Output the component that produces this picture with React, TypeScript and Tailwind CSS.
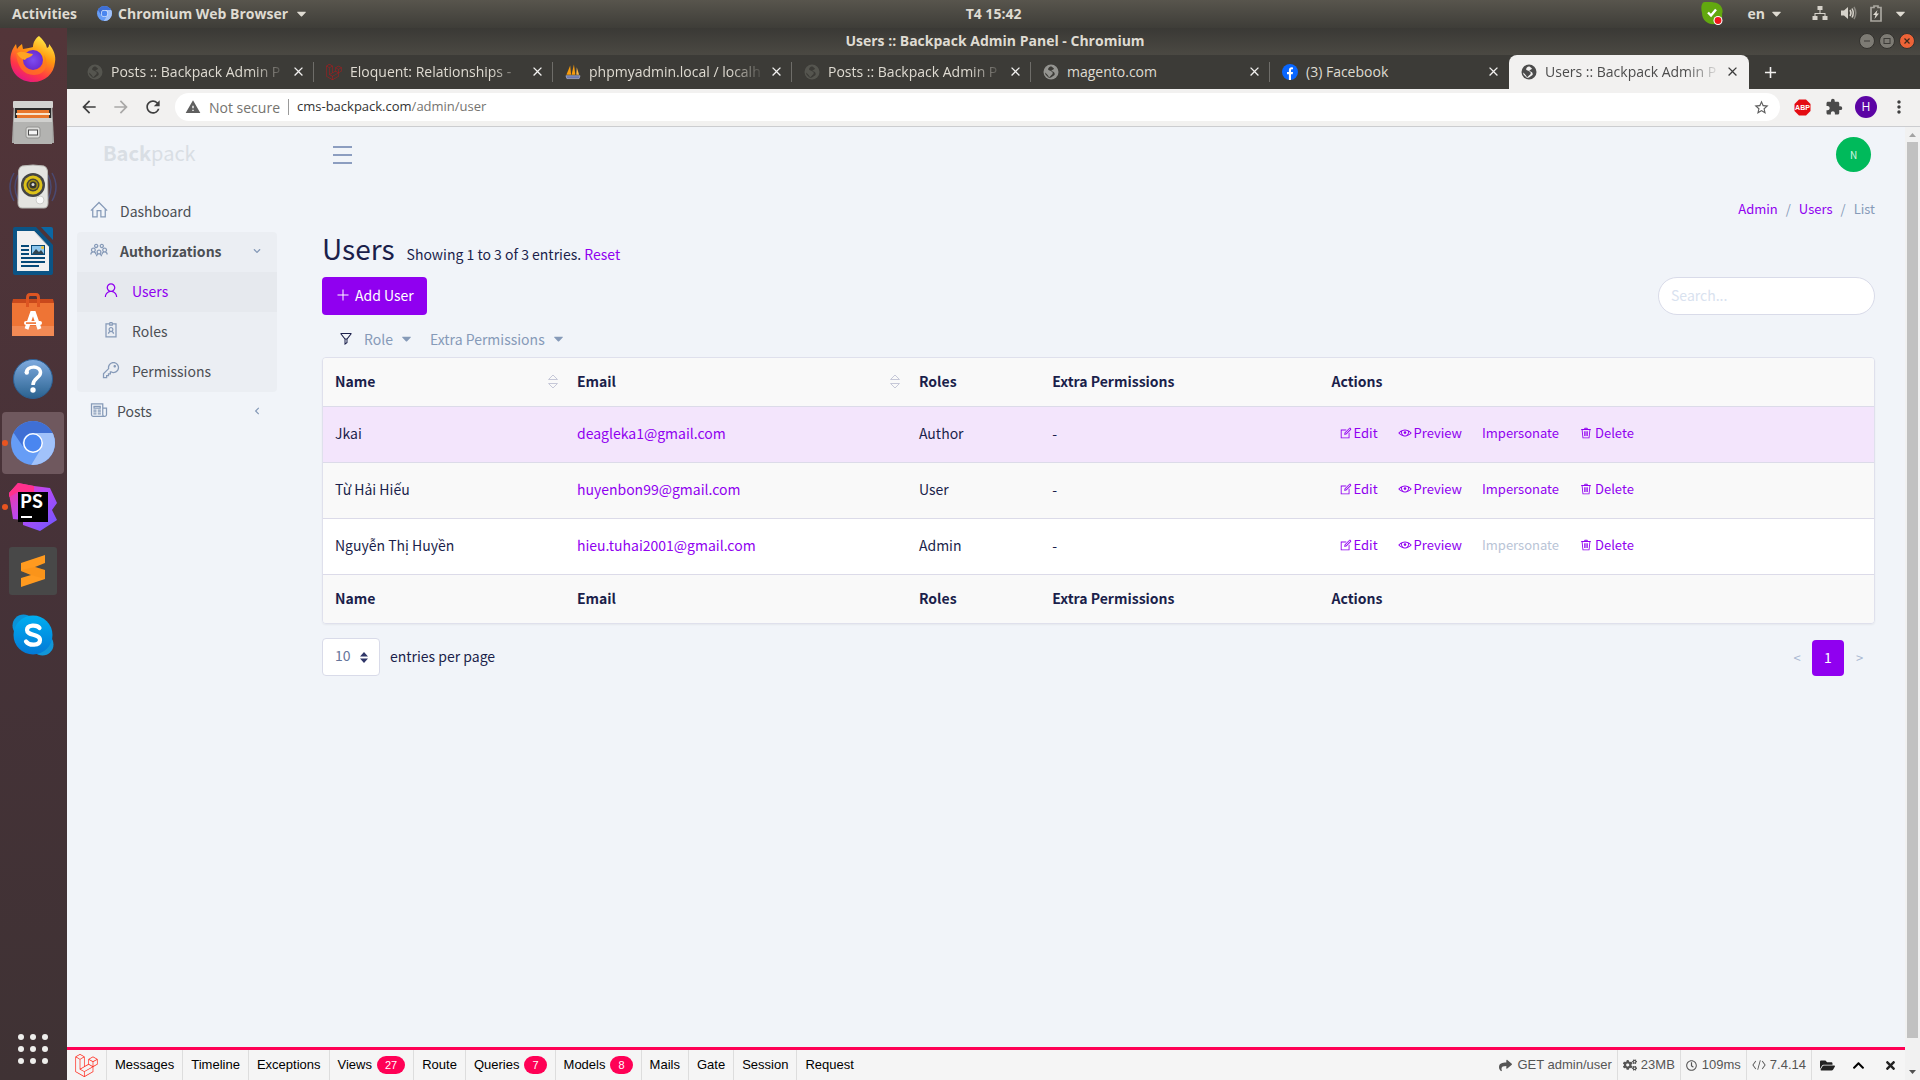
import React from "react";
import {
  LiaHomeSolid, LiaUsersSolid, LiaUserSolid, LiaIdBadge, LiaKeySolid, LiaNewspaper,
  LiaEdit, LiaEye, LiaTrashSolid, LiaPlusSolid, LiaFilterSolid, LiaCodeSolid,
} from "react-icons/lia";
import { FaLaravel, FaShare, FaCogs, FaRegClock, FaFolderOpen, FaChevronUp, FaTimes, FaChevronDown, FaChevronLeft, FaCaretDown } from "react-icons/fa";
import { MdArrowBack, MdArrowForward, MdRefresh, MdWarning, MdStarBorder, MdExtension, MdMoreVert, MdAdd, MdClose } from "react-icons/md";

function ChromiumIcon({ size, id }: { size: number; id: string }) {
  return (
    <svg width={size} height={size} viewBox="0 0 44 44" aria-hidden="true">
      <defs>
        <clipPath id={id}><circle cx="22" cy="22" r="22" /></clipPath>
      </defs>
      <g clipPath={`url(#${id})`}>
        <rect width="44" height="44" fill="#669df6" />
        <path d="M22 12 H44 V0 H0 V8 L13 27 A10 10 0 0 1 22 12Z" fill="#3f6fd4" />
        <path d="M22 12 H46 V46 H19 L30.500 27 A10 10 0 0 0 22 12Z" fill="#a1c2fa" />
      </g>
      <circle cx="22" cy="22" r="10" fill="#fff" />
      <circle cx="22" cy="22" r="8.500" fill="#4a86f0" />
    </svg>
  );
}

function GlobeIcon({ color, hole }: { color: string; hole: string }) {
  return (
    <svg width="16" height="16" viewBox="0 0 16 16" className="shrink-0" aria-hidden="true">
      <circle cx="8" cy="8" r="7.500" fill={color} />
      <path d="M8.500 2.500 C6 2 4.500 5 5.500 6 C7 6.500 8 7 9 8 C10.500 8.500 9.500 10.500 8.500 11 L6 13.500 C5.500 11 3.500 10 2 8.500 L2.500 10.500 L6 14 L8 13.500 L11.500 11 C12.500 8.500 10 7.500 8.500 7 C8 6 10.500 6 11 4.500Z" fill={hole} />
    </svg>
  );
}

function SailIcon() {
  return (
    <svg width="16" height="16" viewBox="0 0 17 16" className="shrink-0" aria-hidden="true">
      <path d="M5.500 1 L6.500 11 H1.500Z" fill="#f89c0e" />
      <path d="M9.500 0 L11 11 H7Z" fill="#f89c0e" />
      <path d="M12.500 3 L15 11 H12Z" fill="#f8b54a" />
      <path d="M1 12 H16 L15 15 H2Z" fill="#6c78af" stroke="#c4c8e0" strokeWidth=".6" />
    </svg>
  );
}

function FacebookIcon() {
  return (
    <svg width="16" height="16" viewBox="0 0 16 16" className="shrink-0" aria-hidden="true">
      <circle cx="8" cy="8" r="8" fill="#0866ff" />
      <path d="M6.900 16 V10.300 H5 V8 H6.900 V6.300 C6.900 4.300 8 3.300 9.700 3.300 L11 3.400 V5.300 H10 C9.200 5.300 9 5.800 9 6.400 V8 H11 L10.700 10.300 H9 V16Z" fill="#fff" />
    </svg>
  );
}

type Tab = { title: string; icon: React.ReactNode };
const tabs: Tab[] = [
  { title: "Posts :: Backpack Admin P", icon: <GlobeIcon color="#55554f" hole="#3c3b37" /> },
  { title: "Eloquent: Relationships -", icon: <FaLaravel size={16} color="#b3191c" className="shrink-0" /> },
  { title: "phpmyadmin.local / localh", icon: <SailIcon /> },
  { title: "Posts :: Backpack Admin P", icon: <GlobeIcon color="#55554f" hole="#3c3b37" /> },
  { title: "magento.com", icon: <GlobeIcon color="#949490" hole="#3c3b37" /> },
  { title: "(3) Facebook", icon: <FacebookIcon /> },
];

function TopPanel() {
  return (
    <header className="flex h-7 shrink-0 items-center bg-linear-to-b from-[#58554d] to-[#3e3d38] px-3 pb-0.5 text-[14px] font-bold text-[#dfdbd2]">
      <div className="flex grow basis-[67px] items-center">
        <button className="mr-5">Activities</button>
        <button className="flex items-center gap-1.5">
          <ChromiumIcon size={15} id="chromium-panel" />
          Chromium Web Browser
          <FaCaretDown size={15} />
        </button>
      </div>
      <time>T4 15:42</time>
      <div className="flex grow basis-0 items-center justify-end">
        <svg width="23" height="23" viewBox="0 0 23 23" aria-label="Skype status" className="mr-6">
          <path d="M2 0.500 C6 -1 11 0 13 0.500 C20 1 23 8 21 12 C22 18 18 22 14 22 C8 23 1 19 1 11 C0 7 0 3 2 0.500Z" fill="#62a80f" />
          <path d="M7 10.500 L10 13.500 L15 7.500" fill="none" stroke="#fff" strokeWidth="2.400" />
          <circle cx="17" cy="18.500" r="4.500" fill="#fff" />
          <circle cx="17" cy="18.500" r="3.400" fill="#f0181c" />
        </svg>
        <button className="mr-7 flex items-center gap-1">en <FaCaretDown size={15} /></button>
        <svg width="16" height="16" viewBox="0 0 16 16" fill="#d6d2ca" aria-label="Network" className="mr-3">
          <path d="M5.500 1 h5 v4 h-2 v3 h5 v3 h2 v4 h-5 v-4 h2 v-2 H3.500 v2 h2 v4 h-5 v-4 h2 v-3 h5 V5 h-2Z" />
        </svg>
        <svg width="17" height="16" viewBox="0 0 17 16" aria-label="Volume" className="mr-3">
          <path d="M1 5.500 h3 L8 2 v12 L4 10.500 H1Z" fill="#d6d2ca" />
          <path d="M10 5 Q12 8 10 11 M12 3.500 Q14.500 8 12 12.500" fill="none" stroke="#d6d2ca" strokeWidth="1.500" />
          <path d="M14 2 Q17.500 8 14 14" fill="none" stroke="#8a8780" strokeWidth="1.500" />
        </svg>
        <svg width="14" height="17" viewBox="0 0 14 17" aria-label="Battery" className="mr-2.5">
          <path d="M5 2.500 V1 h4 v1.500 h3 V16 H2 V2.500Z" fill="none" stroke="#a9a69f" strokeWidth="1.700" />
          <path d="M8.500 5 L4 10 h2.500 L5.500 14 L10 8.500 H7.500Z" fill="#dfdbd2" />
        </svg>
        <FaCaretDown size={15} />
      </div>
    </header>
  );
}

function TitleBar() {
  return (
    <div className="flex h-[27px] shrink-0 items-center bg-linear-to-b from-[#3a3935] to-[#4b4943] pr-[5px] pb-0.5">
      <span className="w-16" />
      <h1 className="flex-1 text-center text-[14px] font-bold text-[#dfdbd2]">Users :: Backpack Admin Panel - Chromium</h1>
      <div className="flex gap-1">
        <button aria-label="Minimize" className="h-4 w-4 rounded-full border border-[#33322e] bg-[#7d7b74]">
          <svg viewBox="0 0 14 14" stroke="#3c3b37"><path d="M4 7 h6" /></svg>
        </button>
        <button aria-label="Maximize" className="h-4 w-4 rounded-full border border-[#33322e] bg-[#7d7b74]">
          <svg viewBox="0 0 14 14" stroke="#3c3b37" fill="none"><rect x="4" y="4.500" width="6" height="5" /></svg>
        </button>
        <button aria-label="Close window" className="h-4 w-4 rounded-full border border-[#33322e] bg-[#ee6337]">
          <svg viewBox="0 0 14 14" stroke="#3c2a1c" strokeWidth="1.200"><path d="M4.500 4.500 l5 5 M9.500 4.500 l-5 5" /></svg>
        </button>
      </div>
    </div>
  );
}

function TabStrip() {
  return (
    <div className="flex h-[34px] shrink-0 bg-[#3c3b37] pl-2 text-[14px]">
      {tabs.map((t, i) => (
        <div key={i} className="flex w-[239px] items-center pb-px pl-3">
          {t.icon}
          <span className={i < 4 ? "ml-2 w-[176px] whitespace-nowrap mask-r-from-80% text-[#dfdbd2]" : "ml-2 w-[176px] whitespace-nowrap text-[#dfdbd2]"}>{t.title}</span>
          <button aria-label="Close tab" className="ml-1 text-[#f2f1f0]"><MdClose size={15} /></button>
          <span className={i === 5 ? "hidden" : "ml-auto h-5 w-px bg-[#6e6d69]"} />
        </div>
      ))}
      <div className="flex w-[240px] items-center rounded-t-lg bg-[#f2f1f0] pb-px pl-3">
        <GlobeIcon color="#4c4c4c" hole="#f2f1f0" />
        <span className="ml-2 w-[176px] whitespace-nowrap mask-r-from-80% text-[#4c4c4c]">Users :: Backpack Admin P</span>
        <button aria-label="Close tab" className="ml-1 text-[#3c3c3c]"><MdClose size={15} /></button>
      </div>
      <button aria-label="New tab" className="ml-3 text-[#f2f1f0]"><MdAdd size={19} /></button>
    </div>
  );
}

function Toolbar() {
  return (
    <div className="flex h-[38px] shrink-0 items-center border-b border-[#cccdd0] bg-[#f2f1f0] px-3 pb-px">
      <div className="flex gap-3 text-[#3f3f3f]">
        <button aria-label="Back"><MdArrowBack size={20} /></button>
        <button aria-label="Forward" className="text-[#a9a8a7]"><MdArrowForward size={20} /></button>
        <button aria-label="Reload"><MdRefresh size={20} /></button>
      </div>
      <div className="ml-3 flex h-7 flex-1 items-center rounded-full bg-white px-2.5 text-[13px] text-[#75736f]">
        <MdWarning size={16} color="#5f5f5f" />
        <span className="ml-2 text-[14px]">Not secure</span>
        <span className="mx-2 h-4 w-px bg-[#9a9a9a]" />
        <span className="flex-1"><span className="text-[#333]">cms-backpack.com</span>/admin/user</span>
        <button aria-label="Bookmark"><MdStarBorder size={17} color="#5f5f5f" /></button>
      </div>
      <button aria-label="Adblock Plus" className="ml-3.5">
        <svg width="17" height="17" viewBox="0 0 17 17">
          <path d="M5 0.500 h7 l4.500 4.500 v7 l-4.500 4.500 h-7 L0.500 12 V5Z" fill="#e40c12" />
          <text x="8.500" y="11" textAnchor="middle" fontSize="7" fontWeight="700" fill="#fff" fontFamily="Liberation Sans">ABP</text>
        </svg>
      </button>
      <button aria-label="Extensions" className="ml-3.5"><MdExtension size={18} color="#4a4a4a" /></button>
      <button className="ml-3 h-[22px] w-[22px] rounded-full bg-[#5c04a4] text-[12px] text-white">H</button>
      <button aria-label="Menu" className="ml-3 -mr-px"><MdMoreVert size={20} color="#3f3f3f" /></button>
    </div>
  );
}

function FirefoxIcon() {
  return (
    <svg width="48" height="48" viewBox="0 0 48 48" aria-hidden="true">
      <defs>
        <linearGradient id="ff-a" x1="0.800" y1="0" x2="0.300" y2="1">
          <stop offset="0" stopColor="#fff44f" /><stop offset=".4" stopColor="#ff980e" /><stop offset=".75" stopColor="#ff3647" /><stop offset="1" stopColor="#e31587" />
        </linearGradient>
        <radialGradient id="ff-b"><stop offset="0" stopColor="#7d4df0" /><stop offset="1" stopColor="#6a2bd0" /></radialGradient>
      </defs>
      <path d="M30 1 C34 5 37 8 38 13 C40 12 40 11 40 9 C45 15 47 21 46 27 C45 39 36 47 24 47 C11 47 2 38 1.500 26 C1 20 3 14 7 9 L8 14 C10 11 12 10 13 9 L14 14 C18 13 22 13 24 12 C24 7 27 3 30 1Z" fill="url(#ff-a)" />
      <path d="M7 18 C12 15 17 18 24 19 C22 23 17 22 16 25 C15 30 20 34 26 34 C34 34 37 27 35 20 C41 29 36 40 25 40 C14 40 8 31 7 18Z" fill="#ff7a1c" opacity=".7" />
      <circle cx="24" cy="25" r="10" fill="url(#ff-b)" />
      <path d="M8 18 C13 15 17 18 24 19 C22 23 18 22 16 25 C12 24 9 21 8 18Z" fill="#ffa321" />
    </svg>
  );
}

function FilesIcon() {
  return (
    <svg width="44" height="48" viewBox="0 0 44 48" aria-hidden="true">
      <path d="M3 2 H41 L43 42 V44 H1 V42Z" fill="#a9a9a7" /><rect x="2" y="2" width="40" height="7" rx="1" fill="#d2d2d0" />
      <rect x="4" y="9" width="36" height="12" fill="#2b2b2b" />
      <path d="M6 11 H38 V19 H6Z" fill="#e8762c" /><path d="M5 14 H39 V16 H5Z" fill="#f7e3cb" />
      <path d="M3 19 H41 V45 H3Z" fill="#b3b3b1" /><path d="M3 19 H41 V23 H3Z" fill="#d0d0ce" />
      <rect x="15" y="28" width="14" height="11" rx="2" fill="#dcdcda" stroke="#929290" />
      <rect x="17.500" y="31" width="9" height="5" fill="#f5f5f5" stroke="#4c4c4c" />
    </svg>
  );
}

function SpeakerIcon() {
  return (
    <svg width="48" height="48" viewBox="0 0 48 48" aria-hidden="true">
      <path d="M5 10 Q-3 24 5 38 M9 12 Q3 24 9 36 M43 10 Q51 24 43 38 M39 12 Q45 24 39 36" stroke="#4a4a72" strokeWidth="1.500" fill="none" />
      <path d="M13 3 Q24 1 35 3 Q38 4 38.500 8 L39 40 Q39 45 35 45 H13 Q9 45 9 40 L9.500 8 Q10 4 13 3Z" fill="#e4e4e1" stroke="#b6b6b2" />
      <circle cx="24" cy="22" r="12" fill="#454545" /><circle cx="24" cy="22" r="9.500" fill="#ddc219" />
      <circle cx="24" cy="22" r="6.500" fill="#4a4636" /><circle cx="24" cy="22" r="5" fill="#a48f0e" />
      <circle cx="24" cy="22" r="3.500" fill="#35352f" /><circle cx="24" cy="21.500" r="1.500" fill="#ddd" />
      <circle cx="31" cy="37" r="4" fill="#fafafa" stroke="#cdcdca" />
    </svg>
  );
}

function WriterIcon() {
  return (
    <svg width="40" height="48" viewBox="0 0 40 48" aria-hidden="true">
      <path d="M2 0 H23 L40 18 V46 Q40 48 38 48 H2 Q0 48 0 46 V2 Q0 0 2 0Z" fill="#0b5485" />
      <path d="M28 0 H38 Q40 0 40 2 V13Z" fill="#0b67a3" />
      <path d="M4 4 H21 L36 20 V44 H4Z" fill="#f1f1f1" /><path d="M21 4 L36 20" stroke="#c4c4c4" />
      <path d="M8 19 h8 M8 23 h8 M8 27 h8 M8 31 h24 M8 35 h24 M8 39 h18" stroke="#064a78" strokeWidth="2" />
      <rect x="18.500" y="18.500" width="13" height="9" fill="#8cc6ec" stroke="#064a78" />
      <path d="M19 27 L23 22 L26 25 L28 23 L31 27Z" fill="#2f4450" /><circle cx="29.500" cy="20.500" r="1.500" fill="#f3c22c" />
    </svg>
  );
}

function SoftwareIcon() {
  return (
    <svg width="42" height="44" viewBox="0 0 42 44" aria-hidden="true">
      <path d="M1 6 H41 L42 10 H0Z" fill="#c9491c" />
      <path d="M0 10 H42 V43 H0Z" fill="#ee7435" /><path d="M0 33 H42 V43 H0Z" fill="#f28a55" />
      <path d="M15.500 14 V5 Q15.500 1.500 18 1.500 H24 Q26.500 1.500 26.500 5 V14" fill="none" stroke="#dd5522" strokeWidth="3" />
      <path d="M14.500 36 L20 20 H22 L27.500 36" fill="none" stroke="#fff" strokeWidth="4" />
      <rect x="12" y="28" width="18" height="4" rx="2" fill="#fff" /><rect x="14" y="29.300" width="10" height="1.600" fill="#ee7435" />
    </svg>
  );
}

function HelpIcon() {
  return (
    <svg width="42" height="42" viewBox="0 0 42 42" aria-hidden="true">
      <defs><linearGradient id="help" x2="0" y2="1"><stop stopColor="#7fabe0" /><stop offset="1" stopColor="#2a628f" /></linearGradient></defs>
      <circle cx="21" cy="21" r="19.500" fill="url(#help)" stroke="#2c5f93" />
      <path d="M14.500 15 C14 7.500 28.500 7 28.500 14.500 C28.500 20 21 20 21 27" fill="none" stroke="#fff" strokeWidth="3.500" />
      <circle cx="14.800" cy="14.500" r="2.200" fill="#fff" /><circle cx="21" cy="32" r="2.700" fill="#fff" />
    </svg>
  );
}

function PhpStormIcon() {
  return (
    <svg width="48" height="48" viewBox="0 0 48 48" aria-hidden="true">
      <defs><linearGradient id="ps" x2="1" y2="1"><stop stopColor="#ff318c" /><stop offset=".45" stopColor="#b74af7" /><stop offset="1" stopColor="#6b57ff" /></linearGradient></defs>
      <path d="M9 0 L25 3 L41 5 L48 20 L43 27 L48 37 L31 48 L14 42 V37 L4 36 L0 10Z" fill="url(#ps)" />
      <path d="M9 0 L25 3 V9 H9 L0 14 V10Z" fill="#ff318c" />
      <rect x="9" y="9" width="30" height="30" fill="#000" />
      <text x="11" y="25" fontSize="18" fontWeight="700" fill="#fff" fontFamily="Noto Sans CJK SC">PS</text>
      <rect x="12" y="33" width="11" height="2" fill="#fff" />
    </svg>
  );
}

function SublimeIcon() {
  return (
    <svg width="48" height="48" viewBox="0 0 48 48" aria-hidden="true">
      <rect width="48" height="48" rx="3" fill="#484848" />
      <path d="M12 16 L36 8 V16 L26 20 L36 23 V32 L12 40 V31 L22 28 L12 24Z" fill="#ff9a1f" />
      <path d="M26 20 L36 23 V32 L22 28 L12 24 V23Z" fill="#f08a10" opacity=".35" />
    </svg>
  );
}

function SkypeIcon() {
  return (
    <svg width="42" height="42" viewBox="0 0 42 42" aria-hidden="true">
      <defs><linearGradient id="sk" x2="0" y2="1"><stop stopColor="#00aef0" /><stop offset="1" stopColor="#0379d6" /></linearGradient></defs>
      <circle cx="11.500" cy="11.500" r="11" fill="#0a93d8" /><circle cx="30.500" cy="30.500" r="11" fill="#1196d8" />
      <circle cx="21" cy="21" r="19.500" fill="url(#sk)" />
      <path d="M27.500 14 C25 10.500 15 10.500 15 16 C15 22 28 19.500 28 26 C28 32 17 32 14 27.500" fill="none" stroke="#fff" strokeWidth="4.200" strokeLinecap="round" />
    </svg>
  );
}

const dock = [
  { name: "Firefox", icon: <FirefoxIcon /> },
  { name: "Files", icon: <FilesIcon /> },
  { name: "Rhythmbox", icon: <SpeakerIcon /> },
  { name: "Writer", icon: <WriterIcon /> },
  { name: "Software", icon: <SoftwareIcon /> },
  { name: "Help", icon: <HelpIcon /> },
  { name: "Chromium", icon: <ChromiumIcon size={44} id="chromium-dock" />, running: true, active: true },
  { name: "PhpStorm", icon: <PhpStormIcon />, running: true },
  { name: "Sublime Text", icon: <SublimeIcon /> },
  { name: "Skype", icon: <SkypeIcon /> },
];

function Dock() {
  return (
    <nav aria-label="Dock" className="flex w-[67px] shrink-0 flex-col bg-linear-to-b from-[#533539] via-[#463238] to-[#3f3234] pr-[3px] pb-1 pl-0.5">
      {dock.map((d) => (
        <button
          key={d.name}
          aria-label={d.name}
          className={
            d.active
              ? "relative mb-0.5 flex h-[62px] items-center justify-center rounded bg-[#6f585e]"
              : "relative mb-0.5 flex h-[62px] items-center justify-center"
          }
        >
          {d.icon}
          {d.running && <span className="absolute top-7 left-0 h-1.5 w-1.5 rounded-full bg-[#e95420]" />}
        </button>
      ))}
      <button aria-label="Show Applications" className="mx-auto mt-auto mb-3 grid grid-cols-3 gap-1.5">
        {Array.from({ length: 9 }, (_, i) => <span key={i} className="h-1.5 w-1.5 rounded-full bg-[#eeeeec]" />)}
      </button>
    </nav>
  );
}

function Sidebar() {
  return (
    <aside className="w-[210px] shrink-0 pl-2.5">
      <a href="#" className="ml-[26px] flex h-[54px] items-center pb-0.5 text-[20px] text-[#d9dee4]"><b>Back</b>pack</a>
      <nav aria-label="Main" className="mt-[11px] text-[14px] text-[#4b4f54]">
        <a href="#" className="flex h-10 items-center pb-0.5 pl-3"><LiaHomeSolid size={20} color="#869ab8" className="mr-[11px] mb-0.5" />Dashboard</a>
        <div className="rounded bg-[#ebeef3]">
          <a href="#" className="flex h-10 items-center pr-4 pb-0.5 pl-3 font-bold">
            <LiaUsersSolid size={20} color="#869ab8" className="mr-[11px] mb-0.5" />Authorizations
            <FaChevronDown size={8} color="#869ab8" className="ml-auto" />
          </a>
          <a href="#" className="flex h-10 items-center bg-[#e6e9ee] pb-0.5 pl-6 text-[#9000f0]"><LiaUserSolid size={20} className="mr-[11px] mb-0.5" />Users</a>
          <a href="#" className="flex h-10 items-center pb-0.5 pl-6"><LiaIdBadge size={20} color="#869ab8" className="mr-[11px] mb-0.5" />Roles</a>
          <a href="#" className="flex h-10 items-center pb-0.5 pl-6"><LiaKeySolid size={20} color="#869ab8" className="mr-[11px] mb-0.5" />Permissions</a>
        </div>
        <a href="#" className="flex h-10 items-center pr-4 pb-0.5 pl-3">
          <LiaNewspaper size={20} color="#869ab8" className="mr-2 mb-0.5" />Posts
          <FaChevronLeft size={8} color="#869ab8" className="ml-auto" />
        </a>
      </nav>
    </aside>
  );
}

function SortIcon() {
  return (
    <svg width="12" height="15" viewBox="0 0 12 15" fill="none" stroke="#c6c8d8" aria-hidden="true">
      <path d="M1.500 5.500 L6 1 L10.500 5.500Z M1.500 9.500 H10.500 L6 14Z" />
    </svg>
  );
}

const rows = [
  { name: "Jkai", email: "deagleka1@gmail.com", role: "Author", bg: "bg-[#f3e5fc]" },
  { name: "Từ Hải Hiếu", email: "huyenbon99@gmail.com", role: "User", bg: "bg-[#f9f9f9]" },
  { name: "Nguyễn Thị Huyền", email: "hieu.tuhai2001@gmail.com", role: "Admin", bg: "bg-white", self: true },
];
const columns = ["Name", "Email", "Roles", "Extra Permissions", "Actions"];

function UsersTable() {
  return (
    <div className="mt-1 overflow-hidden rounded border border-[#dfe0ec] shadow-xs">
      <table className="w-full table-fixed text-left">
        <colgroup>
          <col className="w-[15.6%]" />
          <col className="w-[22.05%]" />
          <col className="w-[8.6%]" />
          <col className="w-[18%]" />
          <col />
        </colgroup>
        <thead className="bg-[#f9f9f9]">
          <tr>
            {columns.map((c, i) => (
              <th key={c} scope="col" className="h-12 pr-1.5 pb-0.5 pl-3 font-bold">
                <div className="flex items-center justify-between">{c}{i < 2 && <button aria-label={"Sort by " + c} className="mt-0.5"><SortIcon /></button>}</div>
              </th>
            ))}
          </tr>
        </thead>
        <tbody>
          {rows.map((r) => (
            <tr key={r.email} className={r.bg}>
              <td className="h-14 border-t border-[#dcdbe9] px-3 pb-0.5">{r.name}</td>
              <td className="border-t border-[#dcdbe9] px-3 pb-0.5"><a href="#" className="text-[#9000f0]">{r.email}</a></td>
              <td className="border-t border-[#dcdbe9] px-3 pb-0.5">{r.role}</td>
              <td className="border-t border-[#dcdbe9] px-3 pb-0.5">-</td>
              <td className="border-t border-[#dcdbe9] px-3 pb-0.5">
                <div className="flex gap-5 pl-2 text-[13px] text-[#9000f0]">
                  <a href="#" className="flex items-center"><LiaEdit size={14} />Edit</a>
                  <a href="#" className="flex items-center gap-0.5"><LiaEye size={14} />Preview</a>
                  <a href="#" className={r.self ? "text-[#b9c4d6]" : ""}>Impersonate</a>
                  <a href="#" className="flex items-center gap-0.5"><LiaTrashSolid size={14} />Delete</a>
                </div>
              </td>
            </tr>
          ))}
        </tbody>
        <tfoot className="bg-[#f9f9f9]">
          <tr>
            {columns.map((c) => <th key={c} className="h-[49px] border-t border-[#dcdbe9] px-3 pb-0.5 font-bold">{c}</th>)}
          </tr>
        </tfoot>
      </table>
    </div>
  );
}

function Main() {
  return (
    <div className="flex min-w-0 flex-1 flex-col">
      <div className="flex h-[54px] items-center justify-between pr-[34px] pl-14">
        <button aria-label="Toggle sidebar" className="flex w-[19px] flex-col gap-1.5 pt-0.5">
          <span className="h-0.5 bg-[#8c9dc0]" /><span className="h-0.5 bg-[#8c9dc0]" /><span className="h-0.5 bg-[#8c9dc0]" />
        </button>
        <button className="h-[35px] w-[35px] rounded-full bg-[#00ba5b] text-[10px] text-[#d5f5e3]">N</button>
      </div>
      <main className="flex flex-col pr-[30px] pl-[45px] text-[14px] leading-6 text-[#1b1f4b]">
        <nav aria-label="Breadcrumb" className="mt-4 flex justify-end gap-2 text-[13px] leading-6 text-[#869ab8]">
          <a href="#" className="text-[#9000f0]">Admin</a><span>/</span>
          <a href="#" className="text-[#9000f0]">Users</a><span>/</span>
          <span>List</span>
        </nav>
        <div className="mt-[7px] flex items-baseline gap-3">
          <h2 className="text-[28px] leading-10">Users</h2>
          <p>Showing 1 to 3 of 3 entries. <a href="#" className="text-[#9000f0]">Reset</a></p>
        </div>
        <div className="mt-[9px] flex items-center justify-between">
          <button className="flex h-[38px] items-center gap-1 rounded bg-[#9000f0] px-[13px] pb-0.5 text-white"><LiaPlusSolid size={16} />Add User</button>
          <input type="search" aria-label="Search" placeholder="Search..." className="h-[38px] w-[217px] rounded-full border border-[#d9dbe9] bg-white px-3 pb-0.5 placeholder:text-[#d9e2ef]" />
        </div>
        <div className="mt-3 flex h-[26px] items-center pb-0.5 pl-4 text-[#869ab8]">
          <LiaFilterSolid size={16} color="#1b1f4b" />
          <button className="ml-2.5 flex items-center gap-1.5">Role <FaCaretDown size={15} className="mb-0.5" /></button>
          <button className="ml-4 flex items-center gap-1.5">Extra Permissions <FaCaretDown size={15} className="mb-0.5" /></button>
        </div>
        <UsersTable />
        <div className="mt-3.5 flex items-center">
          <div className="relative">
            <select id="page-length" defaultValue="10" className="h-[38px] w-[58px] appearance-none rounded border border-[#d9dbe9] bg-white pb-1 pl-3 text-[#66759b]">
              <option>10</option><option>25</option><option>50</option>
            </select>
            <svg width="8" height="11" viewBox="0 0 8 11" className="pointer-events-none absolute top-3.5 right-3" fill="#2f3668" aria-hidden="true"><path d="M4 0 L8 4.500 H0Z M0 6.500 H8 L4 11Z" /></svg>
          </div>
          <label htmlFor="page-length" className="ml-2.5 pb-[3px]">entries per page</label>
          <nav aria-label="Pagination" className="mt-0.5 ml-auto flex items-center text-[#a9b8d2]">
            <button aria-label="Previous page" className="w-[30px] text-[13px]">&lt;</button>
            <button aria-current="page" className="h-9 w-8 rounded bg-[#9000f0] pb-0.5 text-white">1</button>
            <button aria-label="Next page" className="w-[31px] text-[13px]">&gt;</button>
          </nav>
        </div>
      </main>
    </div>
  );
}

const debugTabs: { label: string; count?: number }[] = [
  { label: "Messages" }, { label: "Timeline" }, { label: "Exceptions" }, { label: "Views", count: 27 }, { label: "Route" },
  { label: "Queries", count: 7 }, { label: "Models", count: 8 }, { label: "Mails" }, { label: "Gate" }, { label: "Session" }, { label: "Request" },
];

function DebugBar() {
  return (
    <footer className="flex h-[33px] shrink-0 items-stretch border-t-3 border-[#ff0055] bg-[#f5f5f5] font-['Liberation_Sans',sans-serif] text-[13px] text-black">
      <a href="#" aria-label="Laravel" className="flex w-10 items-center justify-center border-r border-[#ddd]"><FaLaravel size={23} color="#ff2d20" /></a>
      {debugTabs.map((t) => (
        <button key={t.label} className={t.label === "Request" ? "flex items-center px-2" : "flex items-center border-r border-[#ddd] px-2"}>
          {t.label}
          {t.count && <span className="ml-[5px] rounded-full bg-[#ff0055] px-2 text-[11px] leading-[18px] text-white">{t.count}</span>}
        </button>
      ))}
      <div className="ml-auto flex text-[#555]">
        <span className="flex items-center gap-[5px] border-r border-[#ddd] px-[5px]"><FaShare size={13} />GET admin/user</span>
        <span className="flex items-center gap-1 border-r border-[#ddd] px-[5px]"><FaCogs size={14} />23MB</span>
        <span className="flex items-center gap-[5px] border-r border-[#ddd] px-[5px]"><FaRegClock size={11} />109ms</span>
        <span className="flex items-center gap-1 border-r border-[#ddd] px-[5px]"><LiaCodeSolid size={14} />7.4.14</span>
        <button aria-label="Open" className="w-8 pl-2 text-[#222]"><FaFolderOpen size={15} /></button>
        <button aria-label="Minimize bar" className="w-8 pl-2 text-black"><FaChevronUp size={13} /></button>
        <button aria-label="Close bar" className="w-[29px] pl-2 text-[#222]"><FaTimes size={13} /></button>
      </div>
    </footer>
  );
}

function Scrollbar() {
  return (
    <div aria-hidden="true" className="flex w-[15px] shrink-0 flex-col items-center bg-[#f1f1f1]">
      <svg width="15" height="15" viewBox="0 0 15 15"><path d="M4 10 L7.500 6 L11 10Z" fill="#a3a3a3" /></svg>
      <div className="mb-[27px] w-[11px] flex-1 bg-[#c1c1c1]" />
      <svg width="15" height="15" viewBox="0 0 15 15"><path d="M4 5 L7.500 9 L11 5Z" fill="#505050" /></svg>
    </div>
  );
}

export default function App() {
  return (
    <div className="flex h-screen flex-col overflow-hidden font-['Open_Sans',sans-serif]">
      <TopPanel />
      <div className="flex min-h-0 flex-1">
        <Dock />
        <div className="flex min-w-0 flex-1 flex-col">
          <TitleBar />
          <TabStrip />
          <Toolbar />
          <div className="flex min-h-0 flex-1">
            <div className="flex min-w-0 flex-1 flex-col bg-[#f1f4f9] font-['Noto_Sans_CJK_SC','Noto_Sans',sans-serif]">
              <div className="flex min-h-0 flex-1">
                <Sidebar />
                <Main />
              </div>
              <DebugBar />
            </div>
            <Scrollbar />
          </div>
        </div>
      </div>
    </div>
  );
}
